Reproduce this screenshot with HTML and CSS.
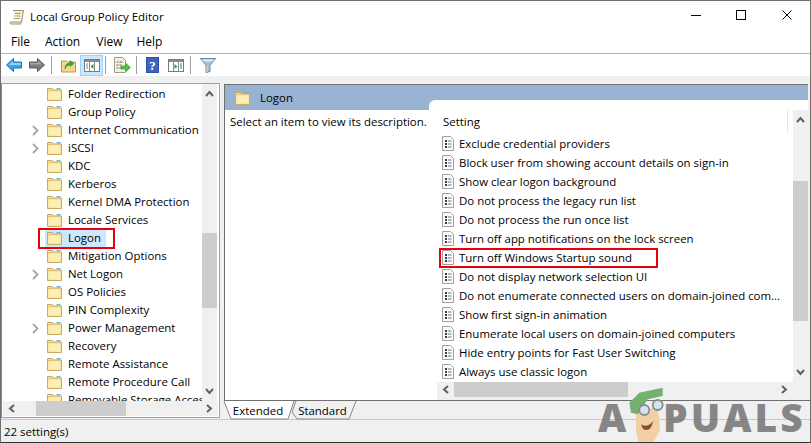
FILE: index.html
```html
<!DOCTYPE html>
<html lang="en">
<head>
<meta charset="utf-8">
<title>Local Group Policy Editor</title>
<link rel="stylesheet" href="styles.css">
</head>
<body>
<svg class="defs" width="0" height="0">
  <defs>
    <symbol id="folder" viewBox="0 0 15 14">
      <path d="M.5 13.500V1.500h5l1.500 1.500h7.500v10.500z" fill="#f8e08f" stroke="#c9aa62"/>
      <path d="M1.500 12.500V4.500h12v8z" fill="#fdeeb5"/>
      <path d="M1 3.500h13" stroke="#e2c578"/>
      <path d="M9.500 1h4v1.500h-4z" fill="#6fb0e0"/>
    </symbol>
    <symbol id="policy" viewBox="0 0 12 15">
      <path d="M.5.500h8l3 3v11H.5z" fill="#fbfbfb" stroke="#a0a0a0"/>
      <path d="M3 4h2v2H3zM3 7h2v2H3zM3 10h2v2H3z" fill="#303a4a"/>
      <path d="M6 5h3.500M6 8h3.500M6 11h3.500" stroke="#6a7484"/>
    </symbol>
    <symbol id="chev" viewBox="0 0 7 11">
      <path d="M1 1l4.500 4.500L1 10" fill="none" stroke="#a6a6a6" stroke-width="1.800"/>
    </symbol>
    <symbol id="arr-up" viewBox="0 0 9 7">
      <path d="M1 6l3.500-4L8 6" fill="none" stroke="#606060" stroke-width="2"/>
    </symbol>
    <symbol id="arr-down" viewBox="0 0 9 7">
      <path d="M1 1l3.500 4L8 1" fill="none" stroke="#606060" stroke-width="2"/>
    </symbol>
    <symbol id="arr-left" viewBox="0 0 7 9">
      <path d="M6 1L2 4.500 6 8" fill="none" stroke="#606060" stroke-width="2"/>
    </symbol>
    <symbol id="arr-right" viewBox="0 0 7 9">
      <path d="M1 1l4 3.500L1 8" fill="none" stroke="#606060" stroke-width="2"/>
    </symbol>
  </defs>
</svg>
<div class="window">
  <header class="titlebar">
    <svg class="app-icon" width="16" height="16" viewBox="0 0 16 16">
      <path d="M4 1.500h10.500L12.500 13H1.500C1 13 .5 14.500 2 15h9c1 0 1.500-1 1.500-2" fill="#f4ecd0" stroke="#9d9272"/>
      <path d="M5.500 4.500h6M5 7h6M4.500 9.500h6" stroke="#a89c78"/>
    </svg>
    <span class="title-text">Local Group Policy Editor</span>
    <div class="win-controls">
      <svg width="10" height="10" viewBox="0 0 10 10"><path d="M0 5.500h10" stroke="#000"/></svg>
      <svg width="10" height="10" viewBox="0 0 10 10"><rect x=".5" y=".5" width="9" height="9" fill="none" stroke="#000"/></svg>
      <svg class="win-close" width="10" height="10" viewBox="0 0 10 10"><path d="M.5.500l9 9M9.500.500l-9 9" stroke="#000"/></svg>
    </div>
  </header>
  <nav class="menubar">
    <span class="menu-file">File</span>
    <span class="menu-action">Action</span>
    <span class="menu-view">View</span>
    <span class="menu-help">Help</span>
  </nav>
  <div class="toolbar">
    <button class="tool tool-back"><svg width="16" height="14" viewBox="0 0 16 14"><path d="M7.500.500L.500 7l7 6.500V10h8V4h-8z" fill="#36a8f0" stroke="#1a6fb8"/><path d="M7 3L2.500 7H15V5H7z" fill="#8ed2fa"/></svg></button>
    <button class="tool tool-fwd"><svg width="16" height="14" viewBox="0 0 16 14"><path d="M8.500.500l7 6.500-7 6.500V10h-8V4h8z" fill="#7c7c7c" stroke="#5a5a5a"/><path d="M1 5h8V3l4 3.500H1z" fill="#a8a8a8"/></svg></button>
    <i class="tool-sep sep-1"></i>
    <button class="tool tool-up"><svg width="15" height="16" viewBox="0 0 15 16"><path d="M.5 15V4h5l1 1h8v10z" fill="#f2d68a" stroke="#b99a55"/><path d="M4 12c0-4 2-6 5-6V3.500L13 6.500 9 9.500V8c-2 0-4 1-5 4z" fill="#3fa33f" stroke="#2a7a2a" stroke-width=".5"/></svg></button>
    <button class="tool tool-tree"><svg width="16" height="13" viewBox="0 0 16 13"><rect x=".5" y=".5" width="15" height="12" fill="#fff" stroke="#7a7a7a"/><path d="M1 1h14v2H1z" fill="#8a8a8a"/><path d="M5.500 3v9M10.500 3v9" stroke="#8a8a8a"/><path d="M2 5h2M2 7h2M2 9h2" stroke="#6f87a0"/><path d="M9.500 5v5L6.500 7.500z" fill="#2ea02e"/></svg></button>
    <i class="tool-sep sep-2"></i>
    <button class="tool tool-export"><svg width="17" height="16" viewBox="0 0 17 16"><path d="M.5.500h8l3 3v12H.5z" fill="#f7f1dc" stroke="#a09a86"/><path d="M2.500 5h2M5.500 5h3M2.500 8h2M5.500 8h2M2.500 11h2M5.500 11h2" stroke="#5a6270"/><path d="M7 9h5V6.500l4.500 4-4.500 4V12H7z" fill="#5cc04c" stroke="#3b8f32" stroke-width=".6"/></svg></button>
    <i class="tool-sep sep-3"></i>
    <button class="tool tool-help"><svg width="13" height="16" viewBox="0 0 13 16"><rect width="13" height="16" fill="#2f50a8"/><rect x="1" y="1" width="11" height="14" fill="#3d64c0"/><text class="help-q" x="6.500" y="13" text-anchor="middle">?</text></svg></button>
    <button class="tool tool-pane"><svg width="16" height="13" viewBox="0 0 16 13"><rect x=".5" y=".5" width="15" height="12" fill="#fff" stroke="#7a7a7a"/><path d="M1 1h14v2H1z" fill="#8a8a8a"/><path d="M5.500 3v9M10.500 3v9" stroke="#8a8a8a"/><path d="M12 5h2M12 7h2M12 9h2" stroke="#3f6fa8"/><path d="M6.500 5v5l3-2.500z" fill="#2ea02e"/></svg></button>
    <i class="tool-sep sep-4"></i>
    <button class="tool tool-filter"><svg width="16" height="15" viewBox="0 0 16 15"><path d="M.5.500h15l-5.500 7v6l-4 1v-7z" fill="#a9bfcf" stroke="#6f8494"/><path d="M2 1.500h12L12.500 3.500h-9z" fill="#e4edf3"/><path d="M7 8v6" stroke="#d5e0e8"/></svg></button>
  </div>
  <main class="main">
    <section class="left-pane">
      <div class="tree-area">
        <ul class="tree">
          <li class="tree-row"><svg class="tw-hide"><use href="#chev"/></svg><svg class="folder"><use href="#folder"/></svg><span>Folder Redirection</span></li>
          <li class="tree-row"><svg class="tw-hide"><use href="#chev"/></svg><svg class="folder"><use href="#folder"/></svg><span>Group Policy</span></li>
          <li class="tree-row"><svg class="tw"><use href="#chev"/></svg><svg class="folder"><use href="#folder"/></svg><span>Internet Communication</span></li>
          <li class="tree-row"><svg class="tw"><use href="#chev"/></svg><svg class="folder"><use href="#folder"/></svg><span>iSCSI</span></li>
          <li class="tree-row"><svg class="tw-hide"><use href="#chev"/></svg><svg class="folder"><use href="#folder"/></svg><span>KDC</span></li>
          <li class="tree-row"><svg class="tw-hide"><use href="#chev"/></svg><svg class="folder"><use href="#folder"/></svg><span>Kerberos</span></li>
          <li class="tree-row"><svg class="tw-hide"><use href="#chev"/></svg><svg class="folder"><use href="#folder"/></svg><span>Kernel DMA Protection</span></li>
          <li class="tree-row"><svg class="tw-hide"><use href="#chev"/></svg><svg class="folder"><use href="#folder"/></svg><span>Locale Services</span></li>
          <li class="tree-row tree-selected"><svg class="tw-hide"><use href="#chev"/></svg><span class="sel-bg"><svg class="folder"><use href="#folder"/></svg><span>Logon</span></span></li>
          <li class="tree-row"><svg class="tw-hide"><use href="#chev"/></svg><svg class="folder"><use href="#folder"/></svg><span>Mitigation Options</span></li>
          <li class="tree-row"><svg class="tw"><use href="#chev"/></svg><svg class="folder"><use href="#folder"/></svg><span>Net Logon</span></li>
          <li class="tree-row"><svg class="tw-hide"><use href="#chev"/></svg><svg class="folder"><use href="#folder"/></svg><span>OS Policies</span></li>
          <li class="tree-row"><svg class="tw-hide"><use href="#chev"/></svg><svg class="folder"><use href="#folder"/></svg><span>PIN Complexity</span></li>
          <li class="tree-row"><svg class="tw"><use href="#chev"/></svg><svg class="folder"><use href="#folder"/></svg><span>Power Management</span></li>
          <li class="tree-row"><svg class="tw-hide"><use href="#chev"/></svg><svg class="folder"><use href="#folder"/></svg><span>Recovery</span></li>
          <li class="tree-row"><svg class="tw-hide"><use href="#chev"/></svg><svg class="folder"><use href="#folder"/></svg><span>Remote Assistance</span></li>
          <li class="tree-row"><svg class="tw-hide"><use href="#chev"/></svg><svg class="folder"><use href="#folder"/></svg><span>Remote Procedure Call</span></li>
          <li class="tree-row"><svg class="tw-hide"><use href="#chev"/></svg><svg class="folder"><use href="#folder"/></svg><span>Removable Storage Access</span></li>
        </ul>
        <div class="vscroll tree-vscroll">
          <svg class="arrow-v"><use href="#arr-up"/></svg>
          <div class="track"><div class="thumb tree-thumb"></div></div>
          <svg class="arrow-v"><use href="#arr-down"/></svg>
        </div>
      </div>
      <div class="hscroll tree-hscroll">
        <svg class="arrow-h"><use href="#arr-left"/></svg>
        <div class="track-h"><div class="thumb-h tree-thumb-h"></div></div>
        <svg class="arrow-h"><use href="#arr-right"/></svg>
      </div>
    </section>
    <section class="right-col">
      <div class="right-pane">
        <div class="pane-head">
          <svg class="folder"><use href="#folder"/></svg>
          <span>Logon</span>
        </div>
        <div class="pane-body">
          <p class="desc">Select an item to view its description.</p>
          <div class="settings">
            <div class="settings-view">
              <div class="col-head"><span>Setting</span><i class="col-rule"></i></div>
              <ul class="policy-list">
                <li class="policy-row"><svg class="policy"><use href="#policy"/></svg><span>Exclude credential providers</span></li>
                <li class="policy-row"><svg class="policy"><use href="#policy"/></svg><span>Block user from showing account details on sign-in</span></li>
                <li class="policy-row"><svg class="policy"><use href="#policy"/></svg><span>Show clear logon background</span></li>
                <li class="policy-row"><svg class="policy"><use href="#policy"/></svg><span>Do not process the legacy run list</span></li>
                <li class="policy-row"><svg class="policy"><use href="#policy"/></svg><span>Do not process the run once list</span></li>
                <li class="policy-row"><svg class="policy"><use href="#policy"/></svg><span>Turn off app notifications on the lock screen</span></li>
                <li class="policy-row policy-marked"><svg class="policy"><use href="#policy"/></svg><span>Turn off Windows Startup sound</span></li>
                <li class="policy-row"><svg class="policy"><use href="#policy"/></svg><span>Do not display network selection UI</span></li>
                <li class="policy-row"><svg class="policy"><use href="#policy"/></svg><span>Do not enumerate connected users on domain-joined com...</span></li>
                <li class="policy-row"><svg class="policy"><use href="#policy"/></svg><span>Show first sign-in animation</span></li>
                <li class="policy-row"><svg class="policy"><use href="#policy"/></svg><span>Enumerate local users on domain-joined computers</span></li>
                <li class="policy-row"><svg class="policy"><use href="#policy"/></svg><span>Hide entry points for Fast User Switching</span></li>
                <li class="policy-row"><svg class="policy"><use href="#policy"/></svg><span>Always use classic logon</span></li>
              </ul>
              <div class="vscroll list-vscroll">
                <svg class="arrow-v"><use href="#arr-up"/></svg>
                <div class="track"><div class="thumb list-thumb"></div></div>
                <svg class="arrow-v"><use href="#arr-down"/></svg>
              </div>
            </div>
            <div class="hscroll list-hscroll">
              <svg class="arrow-h"><use href="#arr-left"/></svg>
              <div class="track-h"><div class="thumb-h list-thumb-h"></div></div>
              <svg class="arrow-h"><use href="#arr-right"/></svg>
            </div>
          </div>
        </div>
      </div>
      <div class="tabs">
        <div class="tab tab-on">
          <svg class="tab-shape" width="72" height="19" viewBox="0 0 72 19"><path d="M0 0l7 18h57l6-18" fill="#fff" stroke="#8a8a8a"/></svg>
          <span>Extended</span>
        </div>
        <div class="tab tab-off">
          <svg class="tab-shape" width="66" height="19" viewBox="0 0 66 19"><path d="M0 11l5 7h52L64 0" fill="none" stroke="#8a8a8a"/><path d="M0 11L4 0" fill="none" stroke="#8a8a8a"/></svg>
          <span>Standard</span>
        </div>
      </div>
    </section>
  </main>
  <footer class="statusbar">22 setting(s)</footer>
  <div class="watermark">
    <span class="wm-a">A</span>
    <svg class="mascot" width="46" height="60" viewBox="0 0 46 60">
      <path d="M9 29L31 21l2 24-8 15H12L9 46z" fill="#f3cfa4"/>
      <path d="M2.300 17.700L12.300 7.700 35.700 2.700V11L20.700 14.300 10.700 29.300 4 27.700z" fill="#74b06f"/>
      <circle cx="17.300" cy="25" r="5" fill="#cfe6f2" stroke="#8a8a8a" stroke-width="1.800"/>
      <circle cx="30.700" cy="20" r="5" fill="#cfe6f2" stroke="#8a8a8a" stroke-width="1.800"/>
      <path d="M14 39c3 3 9 2 12-3-1 6-3 9-7 9-3 0-4-3-5-6z" fill="#8b4a3a"/>
    </svg>
    <span class="wm-rest">PUALS</span>
  </div>
</div>
</body>
</html>
```
FILE: styles.css
```css
*, *::after { box-sizing: border-box; }
html, body { margin: 0; padding: 0; }
body { width: 811px; height: 443px; overflow: hidden; background: #f0f0f0; }
ul { list-style: none; margin: 0; padding: 0; }
p { margin: 0; }
.defs { position: absolute; }

.window {
  position: relative;
  width: 811px;
  height: 443px;
  display: flex;
  flex-direction: column;
  border: 1px solid #707070;
  border-bottom-color: #333;
  background: #f0f0f0;
  color: #000;
  font: 11.45px/16px "Open Sans", sans-serif;
  overflow: hidden;
}

/* title bar */
.titlebar { height: 32px; flex: none; display: flex; align-items: center; background: #fff; padding-left: 8px; }
.app-icon { flex: none; margin-right: 5px; margin-top: -1px; }
.title-text { font-size: 11.5px; margin-top: -1px; }
.win-controls { margin-left: auto; display: flex; gap: 35px; padding-right: 18px; align-self: flex-start; margin-top: 9px; }
.win-close { margin-left: 1px; }

/* menu */
.menubar { height: 21px; flex: none; display: flex; background: #fff; border-bottom: 1px solid #b4b4bc; padding: 0 0 3px 10px; align-items: center; font-size: 12px; }
.menu-action { margin-left: 15px; }
.menu-view { margin-left: 16px; }
.menu-help { margin-left: 14px; }

/* toolbar */
.toolbar { height: 22px; flex: none; display: flex; align-items: center; background: #fff; padding-left: 5px; }
.tool { all: unset; display: flex; align-items: center; justify-content: center; flex: none; }
.tool svg { display: block; }
.tool-fwd { margin-left: 7px; }
.tool-sep { flex: none; width: 1px; height: 18px; background: #a0a0a0; }
.sep-1 { margin-left: 6px; }
.tool-up { margin-left: 9px; }
.tool-tree { margin-left: 4px; width: 23px; height: 21px; background: #cce8ff; border: 1px solid #99d1ff; box-sizing: border-box; }
.sep-2 { margin-left: 2px; }
.tool-export { margin-left: 8px; }
.sep-3 { margin-left: 5px; }
.tool-help { margin-left: 9px; }
.tool-pane { margin-left: 9px; }
.sep-4 { margin-left: 6px; }
.tool-filter { margin-left: 9px; }
.help-q { font: bold 13px "Liberation Serif", serif; fill: #fff; }

/* main */
.main { flex: 1; min-height: 0; display: flex; padding-top: 7px; }

.left-pane { width: 219px; flex: none; display: flex; flex-direction: column; background: #fff; border: 1px solid #a0a0a0; border-left-color: #8a8a8a; margin-bottom: 1px; }
.tree-area { flex: 1; min-height: 0; display: flex; overflow: hidden; }
.tree { flex: 1; min-width: 0; overflow: hidden; padding-top: 1px; }
.tree-row { height: 18px; display: flex; align-items: center; white-space: nowrap; padding-left: 30px; }
.tw, .tw-hide { width: 7px; height: 11px; flex: none; margin-right: 8px; }
.tw-hide { visibility: hidden; }
.folder { width: 15px; height: 14px; flex: none; margin-right: 6px; }
.tree-selected { position: relative; }
.sel-bg { display: flex; align-items: center; height: 17px; background: #cce8ff; margin-left: -2px; padding: 0 5px 0 2px; }
.tree-selected::after { content: ""; position: absolute; left: 36px; top: -1px; width: 77px; height: 21px; border: 2px solid #e8000d; pointer-events: none; }

.vscroll { width: 15px; flex: none; background: #f0f0f0; display: flex; flex-direction: column; align-items: center; }
.arrow-v { width: 9px; height: 7px; flex: none; margin: 6px 0; }
.track { flex: 1; width: 100%; min-height: 0; display: flex; flex-direction: column; }
.thumb { background: #cdcdcd; width: 100%; }
.tree-vscroll { margin-right: 2px; }
.tree-thumb { margin-top: 130px; height: 75px; }
.list-thumb { margin-top: 52px; height: 140px; }
.list-vscroll { height: 272px; }

.hscroll { height: 15px; flex: none; background: #f0f0f0; display: flex; align-items: center; }
.arrow-h { width: 7px; height: 9px; flex: none; margin: 0 5px; }
.track-h { flex: 1; min-width: 0; height: 100%; }
.thumb-h { height: 100%; background: #cdcdcd; }
.tree-hscroll { margin: 0 1px 1px 1px; }
.tree-thumb-h { margin-left: 16px; width: 90px; }
.list-thumb-h { width: 174px; }

/* right */
.right-col { flex: 1; min-width: 0; display: flex; flex-direction: column; margin-left: 4px; padding-top: 1px; }
.right-pane { height: 316px; flex: none; margin-right: 2px; display: flex; flex-direction: column; background: #fff; border-top: 1px solid #707070; border-left: 1px solid #707070; }
.pane-head { height: 25px; flex: none; display: flex; align-items: center; background: #97b3d1; padding-left: 10px; }
.pane-head .folder { margin-right: 10px; }
.pane-body { flex: 1; min-height: 0; display: flex; }
.desc { width: 204px; flex: none; padding: 4px 0 0 5px; white-space: nowrap; }
.settings { flex: 1; min-width: 0; margin-top: -10px; background: #fff; border-top-left-radius: 6px; display: flex; flex-direction: column; }
.settings-view { flex: 1; min-height: 0; display: flex; flex-wrap: wrap; align-content: flex-start; padding-left: 13px; position: relative; }
.col-head { width: calc(100% - 15px); height: 34px; padding: 14px 0 0 1px; position: relative; }
.col-rule { position: absolute; right: 5px; top: 10px; width: 1px; height: 23px; background: #e5e5e5; }
.policy-list { width: calc(100% - 15px); }
.policy-row { height: 19px; display: flex; align-items: center; white-space: nowrap; position: relative; }
.policy { width: 12px; height: 15px; flex: none; margin-right: 5px; }
.policy-marked::after { content: ""; position: absolute; left: -3px; top: 0; width: 219px; height: 20px; border: 2px solid #e8000d; pointer-events: none; }
.list-vscroll { position: absolute; right: 0; top: 10px; }
.list-hscroll { margin-left: 8px; height: 18px; padding-bottom: 3px; border-right: 15px solid #f0f0f0; }

/* tabs */
.tabs { flex: 1; min-height: 0; display: flex; border-top: 1px solid #707070; background: #f0f0f0; }
.tab { position: relative; height: 18px; display: flex; align-items: center; justify-content: center; padding-top: 1px; }
.tab span { position: relative; }
.tab-shape { position: absolute; left: 0; top: 0; overflow: visible; }
.tab-on { width: 68px; z-index: 1; }
.tab-off { width: 64px; padding-right: 3px; }

/* status */
.statusbar { height: 23px; flex: none; border-top: 1px solid #c8c8c8; padding: 4px 0 0 3px; background: #f0f0f0; }

/* watermark */
.watermark { position: absolute; left: 597px; top: 384px; height: 58px; display: flex; pointer-events: none; }
.wm-a, .wm-rest { font: 800 39px/64px "Open Sans", sans-serif; color: rgba(105,105,105,.78); }
.wm-a { width: 29px; }
.mascot { flex: none; }
.wm-rest { margin-left: -10px; letter-spacing: 3px; }
```
